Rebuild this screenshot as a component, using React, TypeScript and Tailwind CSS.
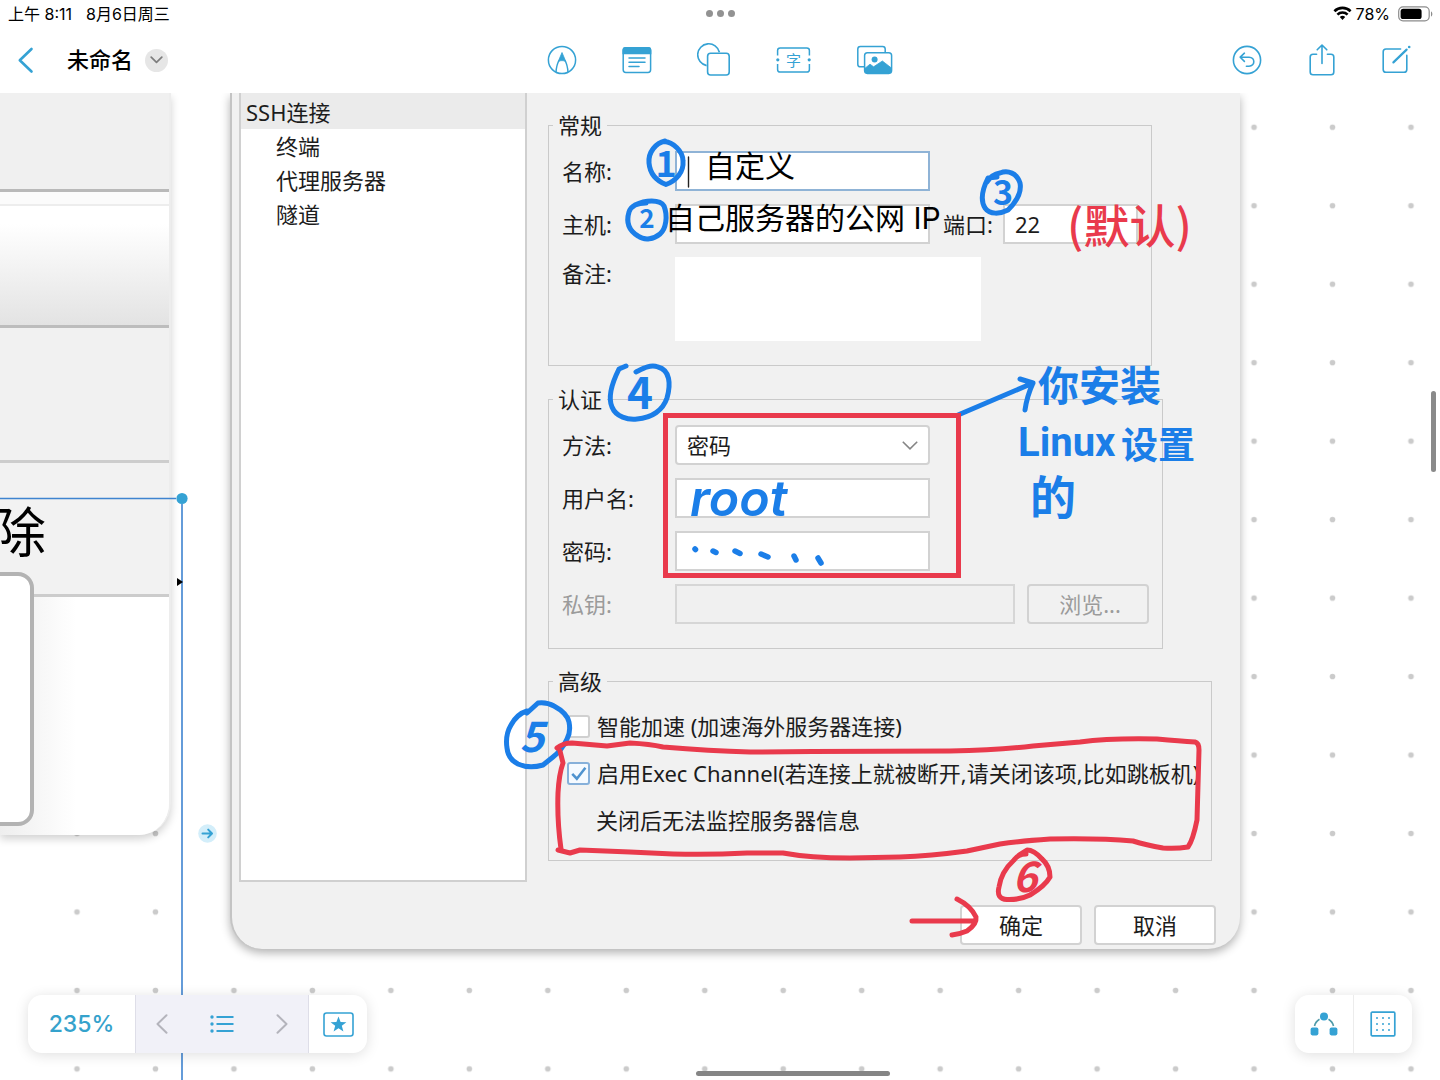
import React from "react";
import type { ReactNode } from "react";

const ACCENT = "#35a2d4";
const BLUE = "#1b7ee8";
const RED = "#e93a4c";

const uiFont = "font-['Noto_Sans','Noto_Sans_CJK_SC',sans-serif]";
const sysFont = "font-['Inter','Noto_Sans_CJK_SC',sans-serif]";

function IconButton({ label, children }: { label: string; children: ReactNode }) {
  return (
    <button type="button" aria-label={label} className="flex items-center justify-center">
      {children}
    </button>
  );
}

function StatusBar() {
  return (
    <div className="grid h-[27px] grid-cols-3 items-center pr-[6px] pl-2 text-[16px] text-black">
      <div className="flex gap-[14px]">
        <span>上午 8:11</span>
        <span>8月6日周三</span>
      </div>
      <div className="flex justify-center gap-1">
        <i className="size-[7px] rounded-full bg-[#929292]" />
        <i className="size-[7px] rounded-full bg-[#929292]" />
        <i className="size-[7px] rounded-full bg-[#929292]" />
      </div>
      <div className="flex items-center justify-end gap-1">
        <svg width="19" height="15" viewBox="0 0 19 15" fill="none" stroke="#000" strokeWidth="2.6">
          <path d="M1.4 5.2 A11.6 11.6 0 0 1 17.6 5.2" />
          <path d="M4.4 8.6 A7.3 7.3 0 0 1 14.6 8.6" />
          <path d="M6.8 11 L9.5 14 L12.2 11 A4 4 0 0 0 6.8 11 Z" fill="#000" stroke="none" />
        </svg>
        <span>78%</span>
        <svg className="ml-1" width="36" height="16" viewBox="0 0 36 16" fill="none">
          <rect x="0.7" y="0.9" width="30.5" height="14" rx="4.3" stroke="#8c8c8c" strokeWidth="1.2" />
          <rect x="2.6" y="2.8" width="21" height="10.3" rx="2.6" fill="#000" />
          <path d="M33 5.4 C34.8 6 34.8 9.8 33 10.4 Z" fill="#8c8c8c" />
        </svg>
      </div>
    </div>
  );
}

function Toolbar() {
  return (
    <div className="grid h-[66px] grid-cols-[1fr_auto_1fr] items-center">
      <div className="flex items-center pl-[17px]">
        <IconButton label="返回">
          <svg width="18" height="28" viewBox="0 0 18 28" fill="none" stroke={ACCENT} strokeWidth="2.6" strokeLinecap="round" strokeLinejoin="round">
            <path d="M14.5 3 L2.8 14.3 L14.5 25.5" />
          </svg>
        </IconButton>
        <h1 className="ml-8 text-[22px] font-medium text-black">未命名</h1>
        <button type="button" aria-label="文档选项" className="ml-3 flex size-[23px] items-center justify-center rounded-full bg-[#e6e6e6]">
          <svg width="13" height="8" viewBox="0 0 13 8" fill="none" stroke="#7d7d7d" strokeWidth="1.7" strokeLinecap="round" strokeLinejoin="round">
            <path d="M1.2 1.2 L6.5 6.4 L11.8 1.2" />
          </svg>
        </button>
      </div>

      <div className="flex items-center gap-[45px]">
        <IconButton label="画笔">
          <svg width="30" height="30" viewBox="0 0 30 30" fill="none" stroke={ACCENT} strokeWidth="1.5">
            <circle cx="15" cy="15" r="13.6" />
            <path d="M9 27 C9.4 22 10.3 18.5 12 15.5 M21 27 C20.6 22 19.7 18.5 18 15.5" />
            <path d="M15 7.5 L18.8 16.5 C16.5 15.3 13.5 15.3 11.2 16.5 Z" fill={ACCENT} strokeWidth="0.8" />
          </svg>
        </IconButton>
        <IconButton label="便笺">
          <svg width="30" height="28" viewBox="0 0 30 28" fill="none" stroke={ACCENT} strokeWidth="1.5" strokeLinecap="round">
            <rect x="1.2" y="1.8" width="27.4" height="24.6" rx="2.6" />
            <path d="M1.2 7.4 V4.4 Q1.2 1.8 3.8 1.8 H26 Q28.6 1.8 28.6 4.4 V7.4 Z" fill={ACCENT} />
            <path d="M7 12 H23 M7 16.3 H23 M7 20.6 H17" />
          </svg>
        </IconButton>
        <IconButton label="形状">
          <svg width="34" height="34" viewBox="0 0 34 34" fill="none" stroke={ACCENT} strokeWidth="1.6">
            <path d="M9.6 22.6 A11 11 0 1 1 22.4 9.2" />
            <rect x="10.6" y="10.2" width="21.6" height="21.8" rx="3" />
          </svg>
        </IconButton>
        <IconButton label="文本框">
          <svg width="35" height="28" viewBox="0 0 35 28" fill="none" stroke={ACCENT} strokeWidth="1.5">
            <path d="M1.6 9.5 V4.5 Q1.6 2 4.2 2 H30.8 Q33.4 2 33.4 4.5 V9.5 M33.4 18 V23.4 Q33.4 26 30.8 26 H4.2 Q1.6 26 1.6 23.4 V18" />
            <circle cx="1.8" cy="13.8" r="1.6" fill={ACCENT} stroke="none" />
            <circle cx="33.2" cy="13.8" r="1.6" fill={ACCENT} stroke="none" />
            <text x="17.5" y="19.6" textAnchor="middle" fontSize="15" fill={ACCENT} stroke="none">字</text>
          </svg>
        </IconButton>
        <IconButton label="图片">
          <svg width="37" height="30" viewBox="0 0 37 30" fill="none" stroke={ACCENT} strokeWidth="1.5">
            <path d="M8.2 21.8 H4.4 Q1.8 21.8 1.8 19.2 V4 Q1.8 1.4 4.4 1.4 H26.6 Q29.2 1.4 29.2 4 V7.8" />
            <rect x="8.6" y="7.8" width="27" height="20.6" rx="2.8" />
            <circle cx="18.6" cy="14.6" r="3" fill={ACCENT} stroke="none" />
            <path d="M8.8 23.4 L14 19.2 L17.6 21.8 L26.4 16 L35.4 23 V26 Q35 28.4 32.8 28.4 H11.4 Q9 28.4 8.8 26 Z" fill={ACCENT} strokeLinejoin="round" strokeWidth="0.8" />
          </svg>
        </IconButton>
      </div>

      <div className="flex items-center justify-end gap-[47px] pr-[29px]">
        <IconButton label="撤销">
          <svg width="30" height="30" viewBox="0 0 30 30" fill="none" stroke={ACCENT} strokeWidth="1.6" strokeLinecap="round" strokeLinejoin="round">
            <circle cx="15" cy="15" r="13.6" />
            <path d="M12.4 8.2 L8.2 12.2 L12.4 16.4 M8.4 12.2 H17 C23.4 12.2 23.4 21.2 17 21.2 H14.4" />
          </svg>
        </IconButton>
        <IconButton label="分享">
          <svg width="26" height="34" viewBox="0 0 26 34" fill="none" stroke={ACCENT} strokeWidth="1.6" strokeLinecap="round" strokeLinejoin="round">
            <path d="M7.6 11.2 H4 Q1.2 11.2 1.2 14 V29 Q1.2 31.8 4 31.8 H22 Q24.8 31.8 24.8 29 V14 Q24.8 11.2 22 11.2 H18.4" />
            <path d="M13 20.4 V2.2 M8.2 6.8 L13 2 L17.8 6.8" />
          </svg>
        </IconButton>
        <IconButton label="新建">
          <svg width="29" height="30" viewBox="0 0 29 30" fill="none" stroke={ACCENT} strokeWidth="1.6" strokeLinecap="round">
            <path d="M18.6 4 H4 Q1.2 4 1.2 6.8 V24.4 Q1.2 27.2 4 27.2 H22 Q24.8 27.2 24.8 24.4 V10.4" />
            <path d="M11.4 17.4 L24.6 4.6" strokeWidth="2.2" />
            <circle cx="27.2" cy="2" r="1.3" fill={ACCENT} stroke="none" />
          </svg>
        </IconButton>
      </div>
    </div>
  );
}

function DotGrid() {
  return (
    <svg aria-hidden="true" className="absolute inset-0 size-full">
      <defs>
        <pattern id="dots" x="37.8" y="-5" width="78.47" height="78.47" patternUnits="userSpaceOnUse">
          <circle cx="39.2" cy="39.2" r="2.8" fill="#cbcbcb" />
        </pattern>
      </defs>
      <rect x="10" width="100%" height="100%" fill="url(#dots)" />
    </svg>
  );
}

function PreviousCard() {
  return (
    <section className={`absolute top-0 left-0 w-[171px] overflow-hidden rounded-br-[32px] border-r-2 border-[#ededed] bg-white text-black shadow-[0_4px_8px_rgba(0,0,0,0.18)] ${uiFont}`}>
      <div className="h-[99px] border-b-3 border-[#b9b9b9] bg-[#f0f0f0]" />
      <div className="h-[14px] border-b-2 border-[#ededed] bg-[#fbfbfb]" />
      <div className="h-[122px] border-b-3 border-[#bdbdbd] bg-linear-to-b from-white from-15% to-[#e3e3e3]" />
      <div className="h-[135px] border-b-3 border-[#cdcdcd] bg-[#f1f1f1]" />
      <div className="h-[134px] border-b-3 border-[#cccccc] bg-[#f2f2f2]">
        <p className="-ml-2 pt-9 text-[54px] leading-[66px]">除</p>
      </div>
      <div className="relative h-[238px] bg-linear-to-r from-[#eeeeee] to-white to-45%">
        <div className="absolute -top-[25px] -left-5 h-[254px] w-[54px] rounded-[16px] border-4 border-[#b3b3b3] bg-white" />
      </div>
    </section>
  );
}

function Group({ title, className, children }: { title: string; className: string; children: ReactNode }) {
  return (
    <fieldset className={`border border-[#cacaca] ${className}`}>
      <legend className="ml-1 px-[5px] leading-6">{title}</legend>
      {children}
    </fieldset>
  );
}

const field = "h-10 border-2 border-[#d2d2d2] bg-white";
const button = "h-10 w-[122px] rounded-[4px] border-2 border-[#d2d2d2]";

function ConnectionDialog() {
  return (
    <section className={`absolute top-0 left-[230px] w-[1010px] rounded-b-[32px] border-l-2 border-[#c4c4c4] bg-[#f1f1f1] pb-1 pl-[7px] text-[22px] text-[#1c1c1c] shadow-[0_4px_10px_rgba(0,0,0,0.3)] ${uiFont}`}>
      <div className="flex items-start">
        <nav className="h-[789px] w-[288px] border-2 border-t-0 border-[#d0d0d0] bg-white leading-[34px]">
          <ul>
            <li className="h-9 bg-[#ebebeb] pt-[2px] pl-[5px]">SSH连接</li>
            <li className="pl-[35px]">终端</li>
            <li className="pl-[35px]">代理服务器</li>
            <li className="pl-[35px]">隧道</li>
          </ul>
        </nav>

        <form className="flex-1 pt-5 pl-[21px]" onSubmit={(e) => e.preventDefault()}>
          <Group title="常规" className="w-[604px]">
            <div className="flex flex-col gap-[13px] pt-[14px] pb-6 pl-[13px]">
              <div className="flex items-center">
                <label htmlFor="name" className="w-[113px]">名称:</label>
                <input id="name" className="h-10 w-[255px] border-2 border-[#8fb3d6] bg-white" />
              </div>
              <div className="flex items-center">
                <label htmlFor="host" className="w-[113px]">主机:</label>
                <input id="host" className={`w-[255px] ${field}`} />
                <label htmlFor="port" className="ml-[13px] w-[60px]">端口:</label>
                <input id="port" defaultValue="22" className={`w-[135px] pl-[10px] ${field}`} />
              </div>
              <div className="flex items-start">
                <label htmlFor="note" className="w-[113px]">备注:</label>
                <textarea id="note" className="h-[84px] w-[306px] resize-none bg-white" />
              </div>
            </div>
          </Group>

          <Group title="认证" className="mt-[21px] w-[615px]">
            <div className="flex flex-col gap-[13px] pt-[14px] pb-6 pl-[13px]">
              <div className="flex items-center">
                <label htmlFor="method" className="w-[113px]">方法:</label>
                <div className="relative">
                  <select id="method" className={`w-[255px] appearance-none rounded-[4px] pl-[10px] ${field}`}>
                    <option>密码</option>
                  </select>
                  <svg aria-hidden="true" className="pointer-events-none absolute top-4 right-3" width="16" height="9" viewBox="0 0 16 9" fill="none" stroke="#858585" strokeWidth="1.6">
                    <path d="M0.8 0.8 L8 7.8 L15.2 0.8" />
                  </svg>
                </div>
              </div>
              <div className="flex items-center">
                <label htmlFor="user" className="w-[113px]">用户名:</label>
                <input id="user" className={`w-[255px] ${field}`} />
              </div>
              <div className="flex items-center">
                <label htmlFor="password" className="w-[113px]">密码:</label>
                <input id="password" type="password" className={`w-[255px] ${field}`} />
              </div>
              <div className="flex items-center text-[#9b9b9b]">
                <label htmlFor="key" className="w-[113px]">私钥:</label>
                <input id="key" disabled className="h-10 w-[340px] border-2 border-[#d6d6d6] bg-[#f0f0f0]" />
                <button type="button" disabled className={`ml-3 pl-1 ${button}`}>浏览...</button>
              </div>
            </div>
          </Group>

          <Group title="高级" className="mt-5 w-[664px]">
            <div className="pt-[10px] pb-4 pl-[18px]">
              <label className="flex h-[47px] items-center gap-[7px]">
                <input type="checkbox" className="size-[23px] appearance-none rounded-[3px] border-2 border-[#d0d0d0] bg-white" />
                智能加速 (加速海外服务器连接)
              </label>
              <label className="flex h-[47px] items-center gap-[7px] whitespace-nowrap">
                <span className="relative flex size-[23px]">
                  <input type="checkbox" defaultChecked className="size-[23px] appearance-none rounded-[3px] border-2 border-[#86b0da] bg-[#f5faff]" />
                  <svg aria-hidden="true" className="pointer-events-none absolute inset-0" width="23" height="23" viewBox="0 0 22 22" fill="none" stroke="#4f93cf" strokeWidth="2.4">
                    <path d="M5 11.4 L9.4 16 L17.6 5.4" />
                  </svg>
                </span>
                启用Exec Channel(若连接上就被断开,请关闭该项,比如跳板机)
              </label>
              <p className="h-[47px] pl-[29px] leading-[47px]">关闭后无法监控服务器信息</p>
            </div>
          </Group>
        </form>
      </div>
      <div className="flex justify-end gap-3 pt-[23px] pr-6">
        <button type="button" className={`bg-white ${button}`}>确定</button>
        <button type="button" className={`bg-white ${button}`}>取消</button>
      </div>
    </section>
  );
}

/* Pen strokes and pen notes that lie over the cards. */
function InkLayer() {
  return (
    <svg className="pointer-events-none absolute inset-0 size-full overflow-hidden font-['Noto_Sans_CJK_SC',sans-serif]" fill="none" strokeLinecap="round" strokeLinejoin="round">
      <g transform="translate(0 -93)">
        <g stroke="#3f84d0" strokeWidth="1.6" strokeLinecap="butt">
          <path d="M0 498.5 H176 M182 504 V1080" />
        </g>
        <circle cx="182" cy="498.5" r="5.6" fill={ACCENT} />
        <path d="M177 578 L183 582 L177 586 Z" fill="#000" />
        <circle cx="207.5" cy="833.5" r="9.3" fill="#d3eefa" />
        <path d="M202.5 833.5 H211.5 M208.2 829.6 L212 833.5 L208.2 837.4" stroke={ACCENT} strokeWidth="2" />
        <path d="M688.5 157 V187" stroke="#222" strokeWidth="1.4" />

        <g stroke={BLUE} strokeWidth="5">
          <path d="M665 141 C656 143 648 152 649 163 C650 174 657 181 666 184.5 C676 181 684 172 683 161 C683 151 673 142 664 141.5" />
          <path d="M635 205 C645 200 660 199 664 206 C668 216 666 229 660 234 C654 239 645 241 638 236 C628 230 626 222 629 212 C631 206 637 203 646 203" />
          <path d="M997 177 L988 178 C983 188 980 200 985 208 C990 215 1000 214 1008 210 C1016 202 1022 193 1020 183 C1017 173 1008 170 1000 173 C994 174 990 177 987 182" />
          <path d="M626 366 L619 369 C611 385 608 398 612 407 C616 417 628 420 637 419 C652 418 663 410 667 398 C671 384 670 370 658 367 C650 364 642 369 636 372" />
          <path d="M527 713 L538 703 Q547 702 554 706 Q567 713 569 722 Q571 732 567 739 Q562 750 553 757 L543 765 Q529 769 518 764 Q508 759 507 748 Q505 735 511 725 Q517 714 527 711" />
          <path d="M958 415 L1033 383 M1020 379 L1033 383 Q1027 396 1025 410" />
          <path d="M695 549 L695.5 549.5 M713 551 L716 552.5 M735 551 L740 553.5 M761 554 L768 557 M794 556 L796 560 M818 558 L821 563" strokeWidth="5.5" />
        </g>

        <g stroke={RED} strokeWidth="5">
          <rect x="665.5" y="415.5" width="293" height="160" strokeLinejoin="miter" />
          <path d="M557 748 Q563 743 572 743 L607 746 L630 743 Q650 744 663 747 Q710 751 750 752 Q860 751 950 751 Q1000 750 1033 746 L1080 742 Q1110 738 1157 739 Q1180 741 1195 742 Q1199 743 1199 750 L1197 820 Q1193 840 1188 847 Q1176 849 1163 848 Q1146 845 1133 841 Q1100 838 1050 839 Q1020 841 1000 844 L967 851 Q930 856 900 857 L850 858 Q810 858 783 853 L747 853 Q710 855 673 854 L630 852 L580 850 L570 853 L558 850" />
          <path d="M561 849 Q557 820 558 793 Q559 774 563 763 L560 751" />
          <path d="M1026 854 Q1018 854 1014 860 Q1001 872 999 887 Q996 899 1007 899.5 Q1020 900 1030 895 Q1045 886 1050 877 Q1050 866 1042 859 Q1034 850 1027 850 L1019 855" />
          <path d="M912 921 H975 M957 899 Q971 906 976 917 Q977 924 967 931 Q960 934 952 935" />
        </g>

        <g fill={BLUE} textAnchor="middle" fontWeight="700">
          <text x="666" y="177" fontSize="36">1</text>
          <text x="647" y="228" fontSize="26">2</text>
          <text x="1003" y="205" fontSize="34">3</text>
          <text x="640" y="409" fontSize="44">4</text>
          <text x="532" y="752" fontSize="42" fontStyle="italic">5</text>
        </g>
        <text x="1025" y="892" fontSize="42" fontStyle="italic" fontWeight="700" fill={RED} textAnchor="middle">6</text>

        <g fill={BLUE}>
          <text x="1038" y="401" fontSize="41" fontWeight="700">你安装</text>
          <text x="1018" y="456" fontSize="40" fontWeight="700" fontFamily="Roboto">Linux</text>
          <text x="1121" y="459" fontSize="37" fontWeight="700">设置</text>
          <text x="1030" y="514" fontSize="46" fontWeight="700">的</text>
          <text x="690" y="516" fontSize="50" fontWeight="600" fontStyle="italic" fontFamily="Inter">root</text>
        </g>
        <text x="1067" y="243" fontSize="46" fontWeight="500" fill={RED}>(默认)</text>
      </g>
    </svg>
  );
}

function CanvasNotes() {
  return (
    <div className={`text-[30px] leading-[44px] whitespace-nowrap text-black ${sysFont}`}>
      <p className="absolute top-[51px] left-[705px]">自定义</p>
      <p className="absolute top-[103px] left-[665px]">自己服务器的公网 IP</p>
    </div>
  );
}

function BottomBars() {
  return (
    <div className="absolute inset-x-7 bottom-[27px] flex items-end justify-between">
      <div className="flex h-[58px] rounded-[14px] bg-white shadow-[0_2px_14px_rgba(0,0,0,0.13)]">
        <button type="button" className="w-[107px] text-[23px] font-medium text-[#35a2cc]">235%</button>
        <div className="flex w-[174px] items-center justify-between border-x border-[#dedee8] bg-[#f1f1f8] px-5">
          <IconButton label="上一个">
            <svg width="12" height="20" viewBox="0 0 12 20" fill="none" stroke="#b4b4bc" strokeWidth="2" strokeLinecap="round" strokeLinejoin="round">
              <path d="M10.5 1.2 L1.5 10 L10.5 18.8" />
            </svg>
          </IconButton>
          <IconButton label="场景列表">
            <svg width="24" height="18" viewBox="0 0 24 18" fill={ACCENT} stroke={ACCENT} strokeWidth="2">
              <path d="M6.5 2 H23.5 M6.5 9 H23.5 M6.5 16 H23.5" />
              <circle cx="2" cy="2" r="1.7" stroke="none" />
              <circle cx="2" cy="9" r="1.7" stroke="none" />
              <circle cx="2" cy="16" r="1.7" stroke="none" />
            </svg>
          </IconButton>
          <IconButton label="下一个">
            <svg width="12" height="20" viewBox="0 0 12 20" fill="none" stroke="#b4b4bc" strokeWidth="2" strokeLinecap="round" strokeLinejoin="round">
              <path d="M1.5 1.2 L10.5 10 L1.5 18.8" />
            </svg>
          </IconButton>
        </div>
        <button type="button" aria-label="添加场景" className="flex w-[58px] items-center justify-center">
          <svg width="31" height="25" viewBox="0 0 31 25" fill="none" stroke={ACCENT} strokeWidth="1.6">
            <rect x="1" y="1" width="29" height="23" rx="2.5" />
            <path d="M15.5 4.4 L17.6 10 L23.4 10.2 L18.8 13.8 L20.4 19.6 L15.5 16.3 L10.6 19.6 L12.2 13.8 L7.6 10.2 L13.4 10 Z" fill={ACCENT} stroke="none" />
          </svg>
        </button>
      </div>

      <div className="flex h-[58px] divide-x divide-[#ececec] rounded-[14px] bg-white shadow-[0_2px_14px_rgba(0,0,0,0.13)]">
        <button type="button" aria-label="连接线" className="flex w-[59px] items-center justify-center">
          <svg width="28" height="24" viewBox="0 0 28 24" fill={ACCENT}>
            <path d="M4.5 14 Q5.5 9.5 9.5 7.2 M23.5 14 Q22.5 9.5 18.5 7.2" fill="none" stroke="#4e9aa8" strokeWidth="1.6" />
            <circle cx="14" cy="4.6" r="4" />
            <rect x="0.6" y="15.6" width="7.8" height="7.8" rx="1.8" />
            <rect x="19.6" y="15.6" width="7.8" height="7.8" rx="1.8" />
          </svg>
        </button>
        <button type="button" aria-label="网格" className="flex w-[58px] items-center justify-center">
          <svg width="26" height="26" viewBox="0 0 26 26" fill="none" stroke={ACCENT}>
            <rect x="1.2" y="1.2" width="23.6" height="23.6" rx="1" strokeWidth="1.7" />
            <path d="M7 7 H20 M7 13 H20 M7 19 H20" strokeWidth="2" strokeLinecap="round" strokeDasharray="0 6" />
          </svg>
        </button>
      </div>
    </div>
  );
}

export default function App() {
  return (
    <div className={`flex h-screen flex-col overflow-hidden bg-white ${sysFont}`}>
      <header className="bg-white">
        <StatusBar />
        <Toolbar />
      </header>
      <main className="relative flex-1 overflow-hidden">
        <DotGrid />
        <PreviousCard />
        <ConnectionDialog />
        <CanvasNotes />
        <InkLayer />
        <BottomBars />
        <div className="absolute top-[298px] right-1 h-[81px] w-[5px] rounded-full bg-[#8a8a8a]" />
        <div className="absolute inset-x-0 bottom-1 flex justify-center">
          <div className="ml-[146px] h-[5px] w-[194px] rounded-full bg-[#858585]" />
        </div>
      </main>
    </div>
  );
}
